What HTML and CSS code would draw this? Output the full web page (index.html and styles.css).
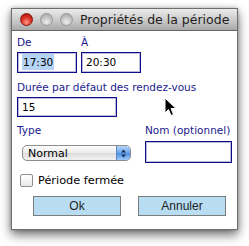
FILE: index.html
```html
<!DOCTYPE html>
<html>
<head>
<meta charset="utf-8">
<link rel="stylesheet" href="styles.css">
</head>
<body>
<div class="window">
  <div class="titlebar">
    <div class="lights">
      <span class="light red"></span>
      <span class="light gray"></span>
      <span class="light gray"></span>
    </div>
    <div class="title">Propriétés de la période</div>
  </div>
  <div class="content">
    <div class="row times">
      <div class="field">
        <label class="lbl">De</label>
        <div class="input w60"><span class="sel">17:30</span></div>
      </div>
      <div class="field">
        <label class="lbl">À</label>
        <div class="input w60">20:30</div>
      </div>
    </div>
    <div class="field dur">
      <label class="lbl">Durée par défaut des rendez-vous</label>
      <div class="input w100">15</div>
    </div>
    <div class="row types">
      <div class="field">
        <label class="lbl">Type</label>
        <div class="select">
          <span class="select-text">Normal</span>
          <span class="stepper">
            <svg width="7" height="9" viewBox="0 0 7 9"><path d="M3.5 0.5 L6 3.5 H1 Z M3.5 8.5 L6 5.5 H1 Z" fill="#1d2d55"/></svg>
          </span>
        </div>
      </div>
      <div class="field nom">
        <label class="lbl">Nom (optionnel)</label>
        <div class="input w87"></div>
      </div>
    </div>
    <div class="check">
      <span class="box"></span>
      <span class="check-text">Période fermée</span>
    </div>
    <div class="buttons">
      <button class="btn">Ok</button>
      <button class="btn">Annuler</button>
    </div>
  </div>
</div>
<svg class="cursor" width="14" height="22" viewBox="0 0 14 22">
  <path d="M1 1 L1 16 L4.5 12.5 L7 18.5 L9.5 17.5 L7 11.5 L12 11.5 Z" fill="#000" stroke="#fff" stroke-width="1"/>
</svg>
</body>
</html>
```
FILE: styles.css
```css
html, body {
  margin: 0;
  padding: 0;
  background: #fff;
  width: 249px;
  height: 246px;
  overflow: hidden;
  position: relative;
}
.window {
  margin: 8px 0 0 11px;
  width: 227px;
  height: 222px;
  box-sizing: border-box;
  border: 1px solid #6e6e6e;
  background: #fff;
  box-shadow: 0 5px 10px rgba(0,0,0,0.55), 0 0 4px rgba(0,0,0,0.25);
  display: flex;
  flex-direction: column;
  font-family: "DejaVu Sans", sans-serif;
}
.titlebar {
  height: 21px;
  flex: none;
  background: linear-gradient(#ebebeb, #c9c9c9 55%, #a9a9a9);
  border-bottom: 1px solid #666;
  display: flex;
  align-items: center;
}
.lights {
  display: flex;
  gap: 7px;
  margin-left: 8px;
}
.light {
  width: 13px;
  height: 13px;
  border-radius: 50%;
  box-sizing: border-box;
}
.red {
  background: radial-gradient(circle at 50% 75%, #ff9a8a 0, #e0362a 45%, #9b0c06 100%);
  border: 1px solid #8a1a10;
}
.gray {
  background: radial-gradient(circle at 50% 75%, #eeeeee 0, #c6c6c6 50%, #9c9c9c 100%);
  border: 1px solid #9a9a9a;
}
.title {
  margin-left: 7px;
  font-size: 12.5px;
  color: #1e1e1e;
  white-space: nowrap;
}
.content {
  padding: 5px 0 0 5px;
  display: flex;
  flex-direction: column;
  font-size: 10.5px;
}
.row {
  display: flex;
}
.field {
  display: flex;
  flex-direction: column;
}
.times {
  gap: 4px;
}
.lbl {
  color: #1b1a8e;
  height: 13px;
  line-height: 13px;
  margin-bottom: 3px;
}
.input {
  height: 21px;
  box-sizing: border-box;
  border: 1px solid #0e0c86;
  box-shadow: inset 0 0 0 1px rgba(30, 28, 140, 0.3);
  padding: 0 0 0 4px;
  line-height: 19px;
  color: #000;
  background: #fff;
}
.w60 { width: 60px; }
.w100 { width: 100px; height: 20px; line-height: 18px; }
.w87 { width: 87px; height: 22px; }
.sel {
  background: #b4d3f5;
  padding: 2px 1px;
}
.dur {
  margin-top: 8px;
}
.dur .lbl { margin-bottom: 3px; }
.types {
  margin-top: 7px;
}
.select {
  margin: 5px 0 0 5px;
  width: 109px;
  height: 16px;
  box-sizing: border-box;
  border: 1px solid #8d8d8d;
  border-radius: 5px;
  background: linear-gradient(#fdfdfd, #ececec 50%, #dcdcdc 51%, #f2f2f2);
  display: flex;
  align-items: center;
  justify-content: space-between;
  overflow: hidden;
}
.select-text {
  padding-left: 5px;
  color: #000;
  font-size: 11px;
}
.stepper {
  width: 13px;
  height: 100%;
  border-left: 1px solid #5c86c0;
  background: linear-gradient(#b5d4f7, #6aa3ea 50%, #4b8fe4 51%, #9cc8f5);
  display: flex;
  align-items: center;
  justify-content: center;
}
.nom {
  margin-left: 14px;
}
.nom .lbl { margin-bottom: 4px; }
.check {
  margin: 11px 0 0 3px;
  display: flex;
  align-items: center;
  gap: 5px;
  line-height: 13px;
}
.box {
  width: 13px;
  height: 13px;
  box-sizing: border-box;
  border: 1px solid #8f8f8f;
  border-radius: 2px;
  background: linear-gradient(#fff, #e8e8e8);
}
.check-text { color: #000; font-size: 11.3px; }
.buttons {
  margin: 9px 0 0 16px;
  display: flex;
  gap: 17px;
}
.btn {
  width: 88px;
  height: 20px;
  box-sizing: border-box;
  border: 1px solid #7c7c7c;
  background: #b8dcf1;
  font-family: "Liberation Sans", sans-serif;
  font-size: 12px;
  color: #1e1e1e;
  padding: 0;
}
.cursor {
  position: absolute;
  left: 164px;
  top: 97px;
}
```
